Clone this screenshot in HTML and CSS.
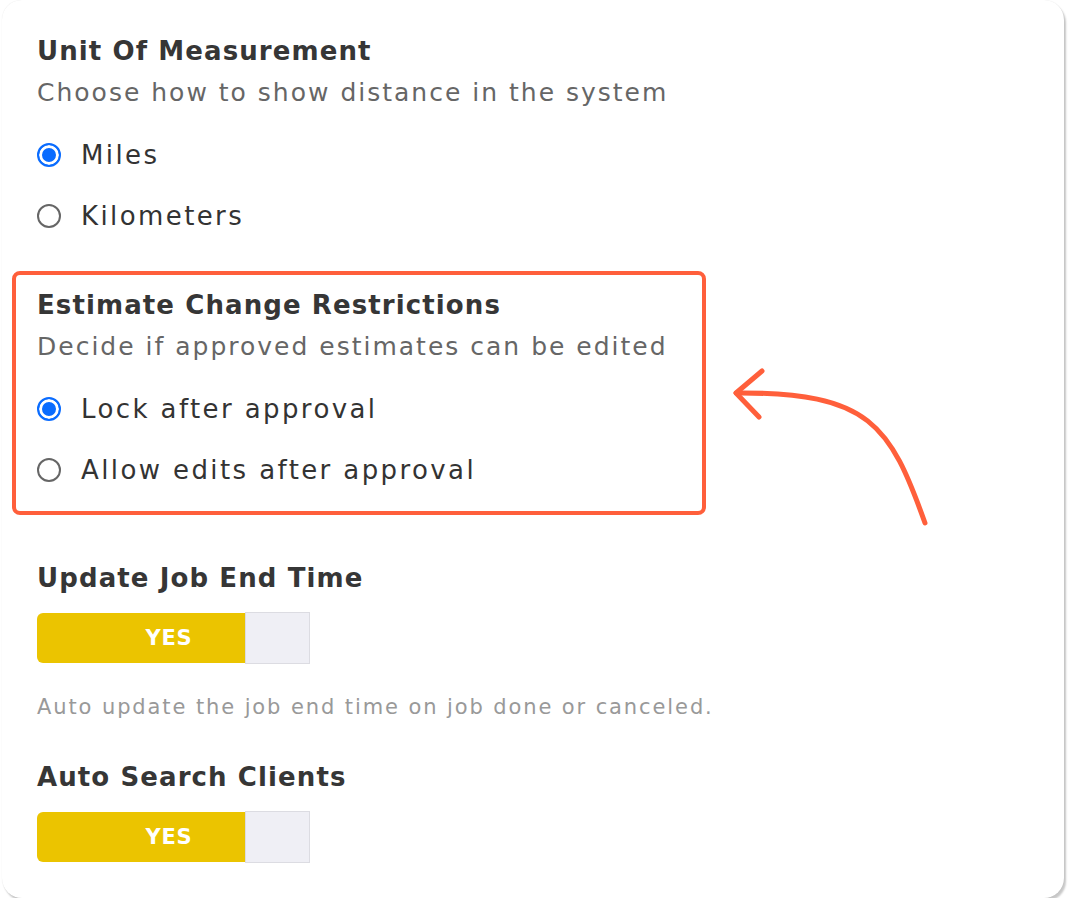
FILE: index.html
```html
<!DOCTYPE html>
<html>

<head>
  <meta name="viewport" content="width=device-width, initial-scale=1">
  <link rel="stylesheet" href="styles.css">
</head>

<body>

  <div class="card">
    <div class="section">
      <h3 class="title">Unit Of Measurement</h3>
      <p class="subtitle">Choose how to show distance in the system</p>
      <label class="option"><input type="radio" name="unit" checked> Miles</label>
      <label class="option"><input type="radio" name="unit"> Kilometers</label>
    </div>

    <div class="section highlight">
      <h3 class="title">Estimate Change Restrictions</h3>
      <p class="subtitle">Decide if approved estimates can be edited</p>
      <label class="option"><input type="radio" name="lock" checked> Lock after approval</label>
      <label class="option"><input type="radio" name="lock"> Allow edits after approval</label>
    </div>

    <div class="section setting">
      <h3 class="title">Update Job End Time</h3>
      <div class="toggle">
        <span class="toggle-on">YES</span>
        <span class="toggle-off"></span>
      </div>
      <p class="helper">Auto update the job end time on job done or canceled.</p>
    </div>

    <div class="section setting last">
      <h3 class="title">Auto Search Clients</h3>
      <div class="toggle">
        <span class="toggle-on">YES</span>
        <span class="toggle-off"></span>
      </div>
    </div>

    <!-- annotation arrow pointing at the highlighted setting -->
    <svg class="arrow" width="1068" height="903" viewBox="0 0 1068 903">
      <path d="M925 523 C890 425 870 392 736 393" />
      <path d="M762 371 L736 393 L759 417" />
    </svg>
  </div>

</body>

</html>
```

FILE: styles.css
```css
body {
  margin: 0;
  font-family: "DejaVu Sans", Inter, sans-serif;
  background-color: #fff;
  color: #333;
}

.card {
  position: relative;
  margin: 0 4px 0 2px;
  height: 898px;
  box-sizing: border-box;
  padding: 31px 35px 0 35px;
  background-color: #fff;
  border-radius: 20px;
  box-shadow: 2px 3px 2px rgba(0, 0, 0, 0.22), 0 0 1px rgba(0, 0, 0, 0.12);
}

.title {
  margin: 0;
  font-size: 26px;
  line-height: 40px;
  font-weight: 700;
  color: #363636;
  letter-spacing: 1.1px;
}

.subtitle {
  margin: 2px 0 0 0;
  font-size: 25px;
  line-height: 40px;
  color: #666;
  letter-spacing: 2px;
}

.option {
  display: flex;
  align-items: center;
  height: 40px;
  margin-top: 21px;
  font-size: 26px;
  color: #333;
  letter-spacing: 2.4px;
}

.option:first-of-type {
  margin-top: 22px;
}

.option input {
  appearance: none;
  -webkit-appearance: none;
  width: 24px;
  height: 24px;
  margin: 0 20px 0 0;
  border: 2px solid #666;
  border-radius: 50%;
  box-sizing: border-box;
  background-color: #fff;
}

.option input:checked {
  border: 2px solid #0a6cff;
  background-color: #0a6cff;
  box-shadow: inset 0 0 0 3px #fff;
}

.highlight {
  margin: 35px 0 0 -25px;
  width: 694px;
  box-sizing: border-box;
  padding: 10px 21px 21px 21px;
  border: 4px solid #ff5f3b;
  border-radius: 8px;
}

.setting {
  margin-top: 43px;
}

.setting.last {
  margin-top: 35px;
}

.toggle {
  display: flex;
  align-items: center;
  margin-top: 14px;
}

.toggle-on {
  width: 208px;
  height: 50px;
  box-sizing: border-box;
  padding-left: 56px;
  display: flex;
  align-items: center;
  justify-content: center;
  background-color: #ebc400;
  border-radius: 6px 0 0 6px;
  color: #fff;
  font-size: 21px;
  font-weight: 700;
  letter-spacing: 0.8px;
}

.toggle-off {
  width: 65px;
  height: 52px;
  box-sizing: border-box;
  background-color: #efeff5;
  border: 1px solid #dcdce2;
}

.helper {
  margin: 28px 0 0 0;
  font-size: 21px;
  line-height: 30px;
  color: #999;
  letter-spacing: 1.9px;
}

.arrow {
  position: absolute;
  left: -2px;
  top: 0;
  pointer-events: none;
}

.arrow path {
  fill: none;
  stroke: #ff5f3b;
  stroke-width: 5;
  stroke-linecap: round;
  stroke-linejoin: round;
}
```
